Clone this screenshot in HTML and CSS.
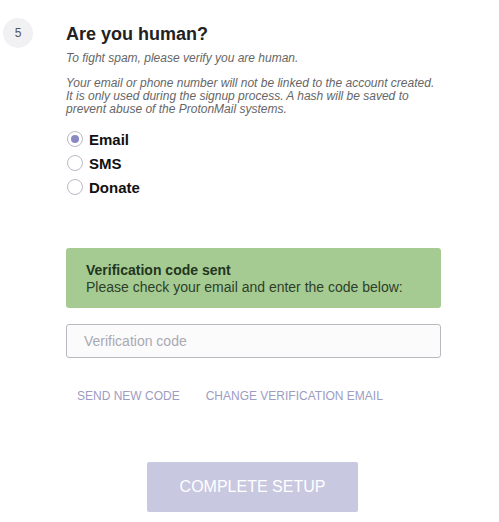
FILE: index.html
```html
<!DOCTYPE html>
<html>
<head>
<meta charset="utf-8">
<link rel="stylesheet" href="styles.css">
</head>
<body>
<div class="step">
  <div class="num">5</div>
  <div class="content">
    <h1 class="title">Are you human?</h1>
    <p class="sub">To fight spam, please verify you are human.</p>
    <p class="note">Your email or phone number will not be linked to the account created.<br>It is only used during the signup process. A hash will be saved to<br>prevent abuse of the ProtonMail systems.</p>
    <div class="radios">
      <label class="radio"><span class="dot checked"></span>Email</label>
      <label class="radio"><span class="dot"></span>SMS</label>
      <label class="radio"><span class="dot"></span>Donate</label>
    </div>
    <div class="alert">
      <strong>Verification code sent</strong>
      <span>Please check your email and enter the code below:</span>
    </div>
    <div class="input">Verification code</div>
    <div class="links">
      <a class="link">SEND NEW CODE</a>
      <a class="link">CHANGE VERIFICATION EMAIL</a>
    </div>
  </div>
</div>
<div class="actions">
  <button class="btn">COMPLETE SETUP</button>
</div>
</body>
</html>
```

FILE: styles.css
```css
* { box-sizing: border-box; }
body {
  margin: 0;
  background: #fff;
  font-family: "Liberation Sans", Arial, sans-serif;
  color: #222;
  width: 499px;
  height: 522px;
  overflow: hidden;
}
.step {
  display: flex;
  padding: 18px 0 0 3px;
}
.num {
  width: 30px;
  height: 30px;
  border-radius: 50%;
  background: #f1f1f3;
  color: #555;
  font-size: 12px;
  display: flex;
  align-items: center;
  justify-content: center;
  flex: none;
}
.content {
  margin-left: 33px;
  width: 375px;
}
.title {
  margin: 5px 0 0;
  font-size: 18px;
  font-weight: bold;
  color: #222;
  line-height: 22px;
}
.sub {
  margin: 6px 0 0;
  font-size: 12px;
  font-style: italic;
  color: #666;
  line-height: 14px;
}
.note {
  margin: 12px 0 0;
  font-size: 12px;
  font-style: italic;
  color: #666;
  line-height: 13px;
  white-space: nowrap;
}
.radios {
  margin-top: 11px;
  display: flex;
  flex-direction: column;
}
.radio {
  display: flex;
  align-items: center;
  height: 24px;
  font-size: 15px;
  font-weight: bold;
  color: #111;
}
.dot {
  width: 16px;
  height: 16px;
  border-radius: 50%;
  border: 1px solid #b9b9c4;
  background: #fff;
  margin-left: 1px;
  margin-right: 6px;
  display: flex;
  align-items: center;
  justify-content: center;
}
.dot.checked::after {
  content: "";
  width: 8px;
  height: 8px;
  border-radius: 50%;
  background: #8a89c4;
}
.alert {
  margin-top: 49px;
  height: 60px;
  background: #a5cb93;
  border-radius: 3px;
  padding: 14px 20px 0;
  display: flex;
  flex-direction: column;
  font-size: 14px;
  line-height: 17px;
  color: #2e3f29;
}
.alert strong { color: #22361d; }
.input {
  margin-top: 16px;
  height: 34px;
  border: 1px solid #b8b8bf;
  border-radius: 3px;
  background: #fbfbfc;
  padding: 0 17px;
  display: flex;
  align-items: center;
  font-size: 14px;
  color: #a9a9b2;
}
.links {
  margin-top: 31px;
  padding-left: 11px;
  display: flex;
  gap: 26px;
  line-height: 14px;
}
.link {
  font-size: 12px;
  color: #9d9cc2;
}
.actions {
  display: flex;
  justify-content: center;
  padding-left: 6px;
  margin-top: 59px;
}
.btn {
  width: 211px;
  height: 50px;
  border: none;
  border-radius: 2px;
  background: #c8c8e1;
  color: #fff;
  font-family: "Liberation Sans", Arial, sans-serif;
  font-size: 16px;
}
```
